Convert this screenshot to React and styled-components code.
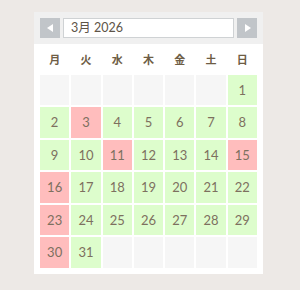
import React from 'react';
import styled, { createGlobalStyle } from 'styled-components';

const Global = createGlobalStyle`
  html, body {
    margin: 0;
    padding: 0;
    background: #ede9e6;
    font-family: Lato, "Noto Sans CJK JP", sans-serif;
  }
`;

const Page = styled.div`
  width: 300px;
  height: 290px;
  padding: 12px 0 0 34px;
  box-sizing: border-box;
`;

const Card = styled.div`
  width: 229px;
  background: #fff;
  padding-bottom: 6px;
`;

const Bar = styled.div`
  display: flex;
  align-items: center;
  gap: 3px;
  padding: 6px;
  background: #f0f0f0;
`;

const NavButton = styled.button`
  width: 20px;
  height: 20px;
  border: 0;
  padding: 0;
  background: #c1c5c9;
  display: flex;
  align-items: center;
  justify-content: center;
  &::after {
    content: '';
    width: 0;
    height: 0;
    border-top: 4px solid transparent;
    border-bottom: 4px solid transparent;
    ${p => (p.$dir === 'prev'
      ? 'border-right: 6px solid #fff; margin-left: -1px;'
      : 'border-left: 6px solid #fff; margin-left: 1px;')}
  }
`;

const MonthInput = styled.div`
  flex: 1;
  height: 20px;
  box-sizing: border-box;
  border: 1px solid #cfd2d4;
  background: #fff;
  font-size: 12.5px;
  line-height: 18px;
  padding-left: 7px;
  color: #5e5448;
`;

const Grid = styled.div`
  display: grid;
  grid-template-columns: repeat(7, 1fr);
  grid-auto-rows: 30.5px;
  gap: 2px;
  padding: 0 6px;
`;

const DayName = styled.div`
  display: flex;
  align-items: center;
  justify-content: center;
  height: 30px;
  font-family: "Noto Sans CJK JP", sans-serif;
  font-weight: 700;
  font-size: 11px;
  color: #6e5d45;
`;

const colors = { empty: '#f6f6f6', open: '#ddfdcc', closed: '#ffbdbd' };

const Cell = styled.div`
  display: flex;
  align-items: center;
  justify-content: center;
  background: ${p => colors[p.$kind]};
  font-size: 13px;
  color: #7d705f;
`;

const days = ['月', '火', '水', '木', '金', '土', '日'];
const closed = [3, 11, 15, 16, 23, 30];

export default function App() {
  const cells = [];
  for (let i = 0; i < 6; i++) cells.push({ kind: 'empty' });
  for (let d = 1; d <= 31; d++) cells.push({ d, kind: closed.includes(d) ? 'closed' : 'open' });
  while (cells.length < 42) cells.push({ kind: 'empty' });

  return (
    <Page>
      <Global />
      <Card>
        <Bar>
          <NavButton $dir="prev" />
          <MonthInput>3月 2026</MonthInput>
          <NavButton $dir="next" />
        </Bar>
        <Grid>
          {days.map(n => <DayName key={n}>{n}</DayName>)}
        </Grid>
        <Grid>
          {cells.map((c, i) => (
            <Cell key={i} $kind={c.kind}>{c.d}</Cell>
          ))}
        </Grid>
      </Card>
    </Page>
  );
}
